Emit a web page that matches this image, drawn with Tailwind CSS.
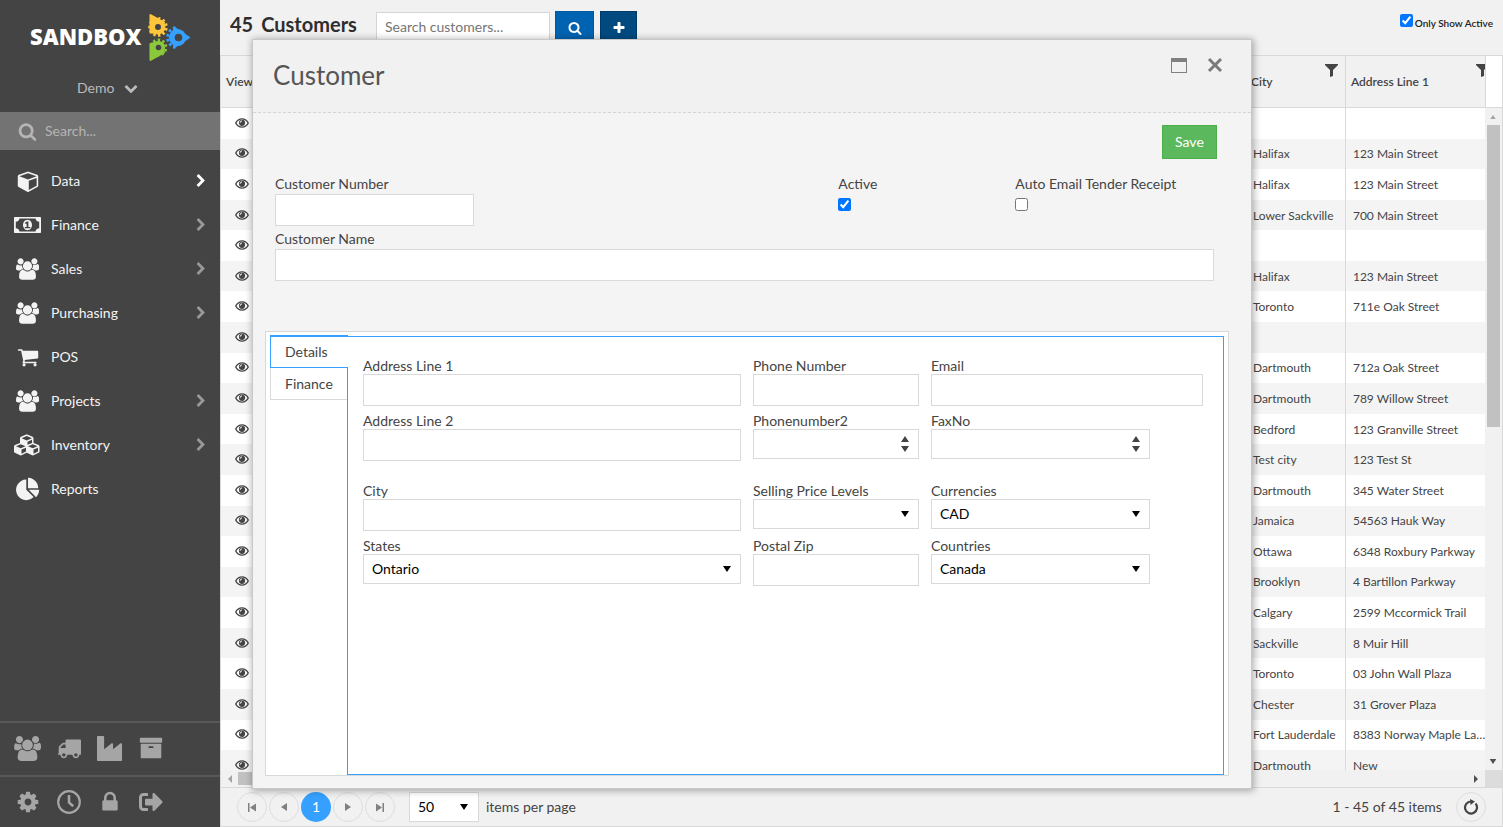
<!DOCTYPE html>
<html lang="en">
<head>
<meta charset="utf-8">
<title>Customers</title>
<script src="https://cdn.jsdelivr.net/npm/@tailwindcss/browser@4"></script>
</head>
<body class="font-['Lato',sans-serif] text-sm text-[#444] bg-[#f1f1f1]">
<svg class="hidden" aria-hidden="true">
  <symbol id="search" viewBox="0 0 1792 1792"><path d="M1216 832q0-185-131.5-316.500t-316.500-131.500-316.500 131.500-131.500 316.500 131.500 316.500 316.500 131.500 316.500-131.500 131.500-316.500zm512 832q0 52-38 90t-90 38q-54 0-90-38l-343-342q-179 124-399 124-143 0-273.500-55.500t-225-150-150-225-55.500-273.500 55.500-273.500 150-225 225-150 273.500-55.500 273.500 55.500 225 150 150 225 55.500 273.500q0 220-124 399l343 343q37 37 37 90z"/></symbol>
  <symbol id="plus" viewBox="0 0 1792 1792"><path d="M1600 736v192q0 40-28 68t-68 28h-416v416q0 40-28 68t-68 28h-192q-40 0-68-28t-28-68v-416h-416q-40 0-68-28t-28-68v-192q0-40 28-68t68-28h416v-416q0-40 28-68t68-28h192q40 0 68 28t28 68v416h416q40 0 68 28t28 68z"/></symbol>
  <symbol id="chev-right" viewBox="0 0 1792 1792"><path d="M1363 877l-742 742q-19 19-45 19t-45-19l-166-166q-19-19-19-45t19-45l531-531-531-531q-19-19-19-45t19-45l166-166q19-19 45-19t45 19l742 742q19 19 19 45t-19 45z"/></symbol>
  <symbol id="chev-down" viewBox="0 0 1792 1792"><path d="M1683 808l-742 741q-19 19-45 19t-45-19l-742-741q-19-19-19-45.500t19-45.500l166-165q19-19 45-19t45 19l531 531 531-531q19-19 45-19t45 19l166 165q19 19 19 45.500t-19 45.500z"/></symbol>
  <symbol id="cube" viewBox="-64 0 1792 1792"><path d="M896 1629l640-349v-636l-640 233v752zm-64-865l698-254-698-254-698 254zm832-252v768q0 35-18 65t-49 47l-704 384q-28 16-61 16t-61-16l-704-384q-31-17-49-47t-18-65v-768q0-40 23-73t61-47l704-256q22-8 44-8t44 8l704 256q38 14 61 47t23 73z"/></symbol>
  <symbol id="money" viewBox="0 256 1920 1280" preserveAspectRatio="none"><path d="M768 1152h384v-96h-128v-448h-114l-148 137 77 80q42-37 55-57h2v288h-128v96zm512-256q0 70-21 142t-59.500 134-101.500 101-138 39-138-39-101.500-101-59.500-134-21-142 21-142 59.500-134 101.500-101 138-39 138 39 101.500 101 59.500 134 21 142zm512 256v-512q-106 0-181-75t-75-181h-1152q0 106-75 181t-181 75v512q106 0 181 75t75 181h1152q0-106 75-181t181-75zm128-832v1152q0 26-19 45t-45 19h-1792q-26 0-45-19t-19-45v-1152q0-26 19-45t45-19h1792q26 0 45 19t19 45z"/></symbol>
  <symbol id="users" viewBox="64 0 1920 1792"><path d="M657 896q-162 5-265 128h-134q-82 0-138-40.500t-56-118.500q0-353 124-353 6 0 43.500 21t97.500 42.500 119 21.500q67 0 133-23-5 37-5 66 0 159 93 287zm1071 637q0 120-73 189.500t-194 69.500h-874q-121 0-194-69.500t-73-189.500q0-53 3.500-103.500t14-109 26.500-108.500 43-97.500 62-81 85.500-53.500 111.500-20q10 0 43 21.500t73 48 107 48 135 21.500 135-21.500 107-48 73-48 43-21.500q61 0 111.500 20t85.500 53.500 62 81 43 97.500 26.500 108.500 14 109 3.500 103.500zm-1024-1277q0 106-75 181t-181 75-181-75-75-181 75-181 181-75 181 75 75 181zm704 384q0 159-112.500 271.500t-271.500 112.500-271.500-112.500-112.500-271.500 112.500-271.500 271.500-112.500 271.500 112.500 112.500 271.500zm576 225q0 78-56 118.500t-138 40.500h-134q-103-123-265-128 93-128 93-287 0-29-5-66 66 23 133 23 59 0 119-21.500t97.500-42.500 43.500-21q124 0 124 353zm-128-609q0 106-75 181t-181 75-181-75-75-181 75-181 181-75 181 75 75 181z"/></symbol>
  <symbol id="cart" viewBox="0 0 1792 1792"><path d="M704 1536q0 52-38 90t-90 38-90-38-38-90 38-90 90-38 90 38 38 90zm896 0q0 52-38 90t-90 38-90-38-38-90 38-90 90-38 90 38 38 90zm128-1088v512q0 24-16.500 42.500t-40.500 21.500l-1044 122q13 60 13 70 0 16-24 64h920q26 0 45 19t19 45-19 45-45 19h-1024q-26 0-45-19t-19-45q0-11 8-31.500t16-36 21.500-40 15.500-29.500l-177-823h-204q-26 0-45-19t-19-45 19-45 45-19h256q16 0 28.500 6.500t19.500 15.500 13 24.500 8 26 5.500 29.500 4.500 26h1201q26 0 45 19t19 45z"/></symbol>
  <symbol id="cubes" viewBox="0 0 2304 1792"><path d="M640 1632l384-192v-314l-384 164v342zm-64-454l404-173-404-173-404 173zm1088 454l384-192v-314l-384 164v342zm-64-454l404-173-404-173-404 173zm-448-293l384-165v-266l-384 164v267zm-64-379l441-189-441-189-441 189zm1088 518v416q0 36-19 67t-52 47l-448 224q-25 14-57 14t-57-14l-448-224q-4-2-7-4-2 2-7 4l-448 224q-25 14-57 14t-57-14l-448-224q-33-16-52-47t-19-67v-416q0-38 21.500-70t56.500-48l434-186v-400q0-38 21.500-70t56.500-48l448-192q23-10 50-10t50 10l448 192q35 16 56.500 48t21.500 70v400l434 186q36 16 57 48t21 70z"/></symbol>
  <symbol id="pie" viewBox="0 -64 1792 1792"><path d="M768 890l546 546q-106 108-247.500 168t-298.500 60q-209 0-385.500-103t-279.500-279.500-103-385.500 103-385.500 279.500-279.500 385.500-103v762zm187 6h773q0 157-60 298.500t-168 247.500zm709-128h-768v-768q209 0 385.500 103t279.500 279.500 103 385.500z"/></symbol>
  <symbol id="truck" viewBox="0 0 1792 1792"><path d="M640 1408q0-52-38-90t-90-38-90 38-38 90 38 90 90 38 90-38 38-90zm-384-512h384v-256h-158q-13 0-22 9l-195 195q-9 9-9 22v30zm1280 512q0-52-38-90t-90-38-90 38-38 90 38 90 90 38 90-38 38-90zm256-1088v1024q0 15-4 26.500t-13.500 18.500-16.500 11.500-23.500 6-22.500 2-25.500 0-22.500-.5q0 106-75 181t-181 75-181-75-75-181h-384q0 106-75 181t-181 75-181-75-75-181h-64q-3 0-22.500.5t-25.500 0-22.500-2-23.500-6-16.500-11.500-13.500-18.500-4-26.500q0-26 19-45t45-19v-320q0-8-.5-35t0-38 2.500-34.500 6.500-37 14-30.500 22.500-30l198-198q19-19 50.500-32t58.500-13h160v-192q0-26 19-45t45-19h1024q26 0 45 19t19 45z"/></symbol>
  <symbol id="industry" viewBox="0 0 1792 1792"><path d="M448 0q26 0 45 19t19 45v891l536-429q17-14 40-14 26 0 45 19t19 45v379l536-429q17-14 40-14 26 0 45 19t19 45v1152q0 26-19 45t-45 19h-1664q-26 0-45-19t-19-45v-1664q0-26 19-45t45-19h384z"/></symbol>
  <symbol id="archive" viewBox="0 0 1792 1792"><path d="M1088 832q0-26-19-45t-45-19h-256q-26 0-45 19t-19 45 19 45 45 19h256q26 0 45-19t19-45zm576-192v960q0 26-19 45t-45 19h-1408q-26 0-45-19t-19-45v-960q0-26 19-45t45-19h1408q26 0 45 19t19 45zm64-448v256q0 26-19 45t-45 19h-1536q-26 0-45-19t-19-45v-256q0-26 19-45t45-19h1536q26 0 45 19t19 45z"/></symbol>
  <symbol id="cog" viewBox="0 0 1792 1792"><path d="M1152 896q0-106-75-181t-181-75-181 75-75 181 75 181 181 75 181-75 75-181zm512-109v222q0 12-8 23t-20 13l-185 28q-19 54-39 91 35 50 107 138 10 12 10 25t-9 23q-27 37-99 108t-94 71q-12 0-26-9l-138-108q-44 23-91 38-16 136-29 186-7 28-36 28h-222q-14 0-24.500-8.500t-11.500-21.500l-28-184q-49-16-90-37l-141 107q-10 9-25 9-14 0-25-11-126-114-165-168-7-10-7-23 0-12 8-23 15-21 51-66.500t54-70.500q-27-50-41-99l-183-27q-13-2-21-12.500t-8-23.500v-222q0-12 8-23t19-13l186-28q14-46 39-92-40-57-107-138-10-12-10-24 0-10 9-23 26-36 98.500-107.500t94.500-71.500q13 0 26 10l138 107q44-23 91-38 16-136 29-186 7-28 36-28h222q14 0 24.500 8.500t11.500 21.500l28 184q49 16 90 37l142-107q9-9 24-9 13 0 25 10 129 119 165 170 7 8 7 22 0 12-8 23-15 21-51 66.500t-54 70.500q26 50 41 98l183 28q13 2 21 12.500t8 23.500z"/></symbol>
  <symbol id="clock" viewBox="0 0 24 24"><circle cx="12" cy="12" r="10.800" fill="none" stroke="currentColor" stroke-width="2.200"/><path d="M12 5v7.500l4.200 3.800" fill="none" stroke="currentColor" stroke-width="2.600"/></symbol>
  <symbol id="lock" viewBox="0 0 1792 1792"><path d="M640 768h512v-192q0-106-75-181t-181-75-181 75-75 181v192zm832 96v576q0 40-28 68t-68 28h-960q-40 0-68-28t-28-68v-576q0-40 28-68t68-28h32v-192q0-184 132-316t316-132 316 132 132 316v192h32q40 0 68 28t28 68z"/></symbol>
  <symbol id="sign-out" viewBox="0 0 512 512"><path d="M497 273L329 441c-15 15-41 4.500-41-17v-96H152c-13.300 0-24-10.700-24-24v-96c0-13.300 10.700-24 24-24h136V88c0-21.400 25.900-32 41-17l168 168c9.300 9.400 9.300 24.600 0 34zM192 436v-40c0-6.600-5.400-12-12-12H96c-17.700 0-32-14.300-32-32V160c0-17.700 14.300-32 32-32h84c6.600 0 12-5.400 12-12V76c0-6.600-5.400-12-12-12H96c-53 0-96 43-96 96v192c0 53 43 96 96 96h84c6.600 0 12-5.400 12-12z"/></symbol>
  <symbol id="eye" viewBox="0 0 14 10"><path fill-rule="evenodd" d="M7 .2C10 .2 12.700 2 14 5c-1.300 3-4 4.800-7 4.800S1.300 8 0 5C1.300 2 4 .2 7 .2zM7 1.500C4.700 1.500 2.600 2.800 1.500 5 2.600 7.200 4.700 8.500 7 8.500S11.400 7.200 12.500 5C11.400 2.800 9.300 1.500 7 1.500z"/><circle cx="7" cy="4.800" r="3.100"/><path d="M5.200 4.700A1.800 1.800 0 0 1 7 2.900" fill="none" stroke="#fff" stroke-width="1"/></symbol>
  <symbol id="funnel" viewBox="0 0 13 13"><path d="M0 0h13v1L8 6v6l-3 1V6L0 1z"/></symbol>
  <symbol id="caret" viewBox="0 0 8 6"><path d="M0 0h8L4 6z"/></symbol>
</svg>

<div class="flex h-screen overflow-hidden">
  <aside class="flex w-[220px] shrink-0 flex-col bg-[#444] text-[#f3f3f3]">
    <div class="flex h-[112px] flex-col">
      <div class="flex items-center gap-2 pt-3 pl-[30px]">
        <span class="w-[110px] font-['Open_Sans',sans-serif] text-[22px] font-extrabold text-white">SANDBOX</span>
        <svg class="h-[50px] w-[43px]" viewBox="0 0 43 50" role="img" aria-label="Sandbox logo">
          <g fill="#ffc63d" stroke="#ffc63d"><path d="M2.500 3L16 10.500 10 21l-7.500-.5z" stroke-width="2" stroke-linejoin="round"/><circle cx="10" cy="15" r="7.500" stroke="none"/><circle cx="10" cy="15" r="8.400" fill="none" stroke-width="2.800" stroke-dasharray="2.400 2.400" pathLength="52.800" transform="rotate(8 10 15)"/></g>
          <g fill="#8cc83c" stroke="#8cc83c"><path d="M2.500 48L16 40.500 11 30l-8.500 2z" stroke-width="2" stroke-linejoin="round"/><circle cx="10.500" cy="35.500" r="6.600" stroke="none"/><circle cx="10.500" cy="35.500" r="7.600" fill="none" stroke-width="2.600" stroke-dasharray="2.400 2.400" pathLength="48" transform="rotate(12 10.500 35.500)"/></g>
          <g fill="#35a0ff" stroke="#35a0ff"><path d="M41 25.500L26 15.500v20z" stroke-width="2" stroke-linejoin="round"/><circle cx="29.500" cy="25.500" r="8.600" stroke="none"/><path d="M27.500 15.700a10 10 0 0 0 0 19.600" fill="none" stroke-width="2.800" stroke-dasharray="2.600 2.400"/></g>
          <g fill="#444"><circle cx="10" cy="15" r="3"/><circle cx="10.500" cy="35.500" r="2.800"/><circle cx="30.500" cy="25.500" r="3.800"/></g>
        </svg>
      </div>
      <button class="flex items-center gap-[10px] pt-4 pl-[77px] leading-5 text-[#bbb]">Demo <svg class="size-[14px] fill-current"><use href="#chev-down"/></svg></button>
    </div>
    <label class="flex h-[38px] items-center gap-2 bg-[#737373] pl-[18px] text-[#b5b5b5]">
      <svg class="size-[19px] fill-current"><use href="#search"/></svg>
      <input class="w-40 bg-transparent outline-none placeholder:text-[#b5b5b5]" placeholder="Search..." aria-label="Search">
    </label>
    <nav class="pt-[9px]">
      <a href="#" class="flex h-11 items-center gap-[5px] pr-3 pl-[9px]"><span class="flex w-[37px] justify-center"><svg class="size-[22px] fill-current"><use href="#cube"/></svg></span><span class="grow">Data</span><svg class="size-[14px] fill-white"><use href="#chev-right"/></svg></a>
      <a href="#" class="flex h-11 items-center gap-[5px] pr-3 pl-[9px]"><span class="flex w-[37px] justify-center"><svg class="h-4 w-[27px] fill-current"><use href="#money"/></svg></span><span class="grow">Finance</span><svg class="size-[14px] fill-[#999]"><use href="#chev-right"/></svg></a>
      <a href="#" class="flex h-11 items-center gap-[5px] pr-3 pl-[9px]"><span class="flex w-[37px] justify-center"><svg class="h-[22px] w-[23px] fill-current"><use href="#users"/></svg></span><span class="grow">Sales</span><svg class="size-[14px] fill-[#999]"><use href="#chev-right"/></svg></a>
      <a href="#" class="flex h-11 items-center gap-[5px] pr-3 pl-[9px]"><span class="flex w-[37px] justify-center"><svg class="h-[22px] w-[23px] fill-current"><use href="#users"/></svg></span><span class="grow">Purchasing</span><svg class="size-[14px] fill-[#999]"><use href="#chev-right"/></svg></a>
      <a href="#" class="flex h-11 items-center gap-[5px] pr-3 pl-[9px]"><span class="flex w-[37px] justify-center"><svg class="size-[22px] fill-current"><use href="#cart"/></svg></span><span class="grow">POS</span></a>
      <a href="#" class="flex h-11 items-center gap-[5px] pr-3 pl-[9px]"><span class="flex w-[37px] justify-center"><svg class="h-[22px] w-[23px] fill-current"><use href="#users"/></svg></span><span class="grow">Projects</span><svg class="size-[14px] fill-[#999]"><use href="#chev-right"/></svg></a>
      <a href="#" class="flex h-11 items-center gap-[5px] pr-3 pl-[9px]"><span class="flex w-[37px] justify-center"><svg class="h-[22px] w-[27px] fill-current"><use href="#cubes"/></svg></span><span class="grow">Inventory</span><svg class="size-[14px] fill-[#999]"><use href="#chev-right"/></svg></a>
      <a href="#" class="flex h-11 items-center gap-[5px] pr-3 pl-[9px]"><span class="flex w-[37px] justify-center"><svg class="size-6 fill-current"><use href="#pie"/></svg></span><span class="grow">Reports</span></a>
    </nav>
    <div class="mt-auto text-[#a5a5a5]">
      <div class="grid h-[54px] grid-cols-[repeat(4,41px)] place-items-center border-t-2 border-[#585858] pb-[2px] pl-[7px]">
        <a href="#" aria-label="Customers"><svg class="h-[25px] w-[27px] fill-current"><use href="#users"/></svg></a>
        <a href="#" aria-label="Suppliers"><svg class="size-6 fill-current"><use href="#truck"/></svg></a>
        <a href="#" aria-label="Industry"><svg class="size-[25px] fill-current"><use href="#industry"/></svg></a>
        <a href="#" aria-label="Archive"><svg class="size-6 fill-current"><use href="#archive"/></svg></a>
      </div>
      <div class="grid h-[52px] grid-cols-[repeat(4,41px)] place-items-center border-t-2 border-[#585858] pl-[7px]">
        <a href="#" aria-label="Settings"><svg class="size-6 fill-current"><use href="#cog"/></svg></a>
        <a href="#" aria-label="History"><svg class="size-6 fill-current"><use href="#clock"/></svg></a>
        <a href="#" aria-label="Lock"><svg class="size-6 fill-current"><use href="#lock"/></svg></a>
        <a href="#" aria-label="Sign out"><svg class="size-6 fill-current"><use href="#sign-out"/></svg></a>
      </div>
    </div>
  </aside>

  <main class="relative flex min-w-0 grow flex-col">
    <header class="flex h-[55px] shrink-0 items-start pr-[10px] pl-[10px]">
      <h1 class="mt-[9px] flex w-[146px] gap-2 text-xl leading-[30px] font-bold text-[#2e2e2e]"><span>45</span><span>Customers</span></h1>
      <input class="mt-3 h-7 w-[174px] border border-[#d5d5d5] bg-white px-2 outline-none placeholder:text-[#757575]" placeholder="Search customers..." aria-label="Search customers">
      <button class="mt-[11px] ml-[5px] flex h-[34px] w-[39px] items-center justify-center border border-[#0058a0] bg-[#0063b1] text-white" aria-label="Search"><svg class="size-[14px] fill-current"><use href="#search"/></svg></button>
      <button class="mt-[11px] ml-[6px] flex h-[34px] w-[37px] items-center justify-center border border-[#003a66] bg-[#004a80] text-white" aria-label="Add customer"><svg class="size-[14px] fill-current"><use href="#plus"/></svg></button>
      <label class="mt-[14px] ml-auto flex gap-[2px] text-[10px] leading-[19px] font-semibold text-[#222]"><input type="checkbox" checked class="size-[13px] accent-[#0075ff]">Only Show Active</label>
    </header>

    <section class="flex min-h-0 grow flex-col border border-[#d9d9d9] text-xs">
      <div class="flex min-h-0 grow">
        <div class="min-w-0 grow overflow-hidden">
          <table class="h-[725px] w-[calc(100%+11px)] table-fixed border-separate border-spacing-0">
            <colgroup><col class="w-10"><col><col class="w-[100px]"><col class="w-[150px]"></colgroup>
            <thead>
              <tr class="h-[52px] bg-[#f1f1f1] text-left">
                <th class="border-b border-[#d9d9d9] p-0 pl-[5px] font-semibold">View</th>
                <th class="border-b border-[#d9d9d9] p-0"></th>
                <th class="border-r border-b border-[#d9d9d9] p-0 pl-[5px] font-semibold"><div class="relative leading-[51px]">City<svg class="absolute top-2 right-[7px] size-[13px] fill-[#444]"><use href="#funnel"/></svg></div></th>
                <th class="border-b border-[#d9d9d9] p-0 pl-[5px] font-semibold"><div class="relative leading-[51px]">Address Line 1<svg class="absolute top-2 right-[7px] size-[13px] fill-[#444]"><use href="#funnel"/></svg></div></th>
              </tr>
            </thead>
            <tbody id="rows"></tbody>
          </table>
        </div>
        <div class="z-10 flex w-[17px] shrink-0 flex-col bg-[#f1f1f1]" aria-hidden="true">
          <div class="h-[52px] border-b border-l border-[#d9d9d9] bg-white"></div>
          <div class="flex h-[17px] items-center justify-center"><svg class="h-1 w-2 rotate-180 fill-[#a3a3a3]"><use href="#caret"/></svg></div>
          <div class="mx-[2px] h-[302px] bg-[#c1c1c1]"></div>
          <div class="mt-auto flex h-[17px] items-center justify-center"><svg class="h-[5px] w-2 fill-[#505050]"><use href="#caret"/></svg></div>
        </div>
      </div>
      <div class="z-10 flex h-[17px] shrink-0 bg-[#f1f1f1]" aria-hidden="true">
        <div class="flex w-[17px] items-center justify-center"><svg class="h-2 w-1 fill-[#a3a3a3]" viewBox="0 0 4 8"><path d="M4 0v8L0 4z"/></svg></div>
        <div class="my-[2px] w-40 bg-[#c1c1c1]"></div>
        <div class="ml-auto flex w-[17px] items-center justify-center"><svg class="h-2 w-1 fill-[#505050]" viewBox="0 0 4 8"><path d="M0 0v8l4-4z"/></svg></div>
        <div class="w-[17px] bg-[#dcdcdc]"></div>
      </div>
      <footer class="z-10 flex h-[39px] shrink-0 items-center gap-[2px] border-t border-[#d9d9d9] bg-[#f1f1f1] pr-4 pl-4 text-sm">
        <button class="flex size-[30px] items-center justify-center rounded-full border border-[#dedede]" aria-label="First page"><svg class="h-[9px] w-2 fill-[#808080]" viewBox="0 0 8 9"><path d="M0 0h1.500v9H0zM8 .5v8l-6-4z"/></svg></button>
        <button class="flex size-[30px] items-center justify-center rounded-full border border-[#dedede]" aria-label="Previous page"><svg class="h-2 w-[6px] fill-[#808080]" viewBox="0 0 6 8"><path d="M6 0v8L0 4z"/></svg></button>
        <button class="flex size-[30px] items-center justify-center rounded-full bg-[#35a0ff] text-white">1</button>
        <button class="flex size-[30px] items-center justify-center rounded-full border border-[#dedede]" aria-label="Next page"><svg class="h-2 w-[6px] fill-[#808080]" viewBox="0 0 6 8"><path d="M0 0v8l6-4z"/></svg></button>
        <button class="flex size-[30px] items-center justify-center rounded-full border border-[#dedede]" aria-label="Last page"><svg class="h-[9px] w-2 fill-[#808080]" viewBox="0 0 8 9"><path d="M6.500 0H8v9H6.500zM0 .5v8l6-4z"/></svg></button>
        <label class="ml-3 flex items-center gap-[7px]"><span class="relative flex items-center"><select class="h-[30px] w-[70px] appearance-none border border-[#d9d9d9] bg-white px-2 text-black"><option>50</option></select><svg class="pointer-events-none absolute right-[11px] h-[6px] w-2"><use href="#caret"/></svg></span>items per page</label>
        <span class="ml-auto">1 - 45 of 45 items</span>
        <button class="ml-3 flex size-[30px] items-center justify-center rounded-full border border-[#dedede]" aria-label="Refresh"><svg class="size-4" viewBox="0 0 16 16"><path d="M12.500 4.500A6 6 0 1 1 8 2.500" fill="none" stroke="#444" stroke-width="2.200"/><path d="M7 0l5 2.600L7.500 6z" fill="#444"/></svg></button>
      </footer>
    </section>

    <div role="dialog" aria-labelledby="dialog-title" class="absolute top-[39px] right-[251px] bottom-[38px] left-8 z-20 flex flex-col border border-[#c8c8c8] bg-[#f4f4f4] shadow-[1px_1px_7px_1px_rgba(0,0,0,0.3)]">
      <div class="flex h-[73px] shrink-0 items-center border-b border-dashed border-[#d5d5d5] bg-[#f1f1f1] pr-7 pl-5">
        <h2 id="dialog-title" class="grow text-[26px] text-[#555]">Customer</h2>
        <button class="mr-5 mb-[22px] h-[15px] w-4 border border-t-4 border-[#808080]" aria-label="Maximize"></button>
        <button class="mb-[22px]" aria-label="Close"><svg class="size-4" viewBox="0 0 16 16"><path d="M2 2l12 12M14 2L2 14" stroke="#7a7a7a" stroke-width="3"/></svg></button>
      </div>
      <form class="flex min-h-0 grow flex-col px-3 pb-3">
        <button type="button" class="mt-3 mr-[22px] h-[34px] w-[55px] self-end border border-[#4cae4c] bg-[#5cb85c] text-white">Save</button>
        <div class="mt-[15px] mr-[25px] ml-[10px] leading-5">
          <div class="flex h-[55px]">
            <label class="w-[60%]">Customer Number<input class="block h-8 w-[199px] border border-[#d9d9d9] bg-white px-2"></label>
            <label class="w-[177px]">Active<input type="checkbox" checked class="mt-1 block size-[13px] accent-[#0075ff]"></label>
            <label>Auto Email Tender Receipt<input type="checkbox" class="mt-1 block size-[13px]"></label>
          </div>
          <label class="block">Customer Name<input class="block h-8 w-full border border-[#d9d9d9] bg-white px-2"></label>
        </div>
        <div class="mt-[50px] mr-[10px] flex grow border border-[#d9d9d9] bg-white pt-[3px] pr-1 pl-1">
          <div role="tablist" class="z-10 -mr-px w-[78px] shrink-0">
            <button type="button" role="tab" aria-selected="true" class="block h-[33px] w-full border border-t-2 border-r-0 border-[#35a0ff] bg-white pl-[14px] text-left">Details</button>
            <button type="button" role="tab" class="block h-8 w-[77px] border border-t-0 border-r-0 border-[#d9d9d9] bg-white pl-[14px] text-left">Finance</button>
          </div>
          <div role="tabpanel" class="mt-px grid grow grid-cols-[378fr_166fr_272fr] grid-rows-[55px_70px_55px_55px] gap-x-3 border border-[#35a0ff] pt-5 pr-5 pl-[15px] leading-[17px]">
            <label>Address Line 1<input class="block h-8 w-full border border-[#d9d9d9] px-2"></label>
            <label>Phone Number<input class="block h-8 w-full border border-[#d9d9d9] px-2"></label>
            <label>Email<input type="email" class="block h-8 w-full border border-[#d9d9d9] px-2"></label>

            <label>Address Line 2<input class="block h-8 w-full border border-[#d9d9d9] px-2"></label>
            <label>Phonenumber2<span class="relative block"><input class="block h-[30px] w-full border border-[#d9d9d9] px-2"><svg class="absolute top-[7px] right-[10px] h-4 w-2 fill-[#444]" viewBox="0 0 8 16"><path d="M4 0l4 6H0zM0 10h8l-4 6z"/></svg></span></label>
            <label>FaxNo<span class="relative block w-[219px]"><input class="block h-[30px] w-full border border-[#d9d9d9] px-2"><svg class="absolute top-[7px] right-[10px] h-4 w-2 fill-[#444]" viewBox="0 0 8 16"><path d="M4 0l4 6H0zM0 10h8l-4 6z"/></svg></span></label>

            <label>City<input class="block h-8 w-full border border-[#d9d9d9] px-2"></label>
            <label>Selling Price Levels<span class="relative block"><select class="block h-[30px] w-full appearance-none border border-[#d9d9d9] bg-white px-2 text-black"><option></option></select><svg class="pointer-events-none absolute top-3 right-[10px] h-[6px] w-2"><use href="#caret"/></svg></span></label>
            <label>Currencies<span class="relative block w-[219px]"><select class="block h-[30px] w-full appearance-none border border-[#d9d9d9] bg-white px-2 pb-px text-black"><option>CAD</option></select><svg class="pointer-events-none absolute top-3 right-[10px] h-[6px] w-2"><use href="#caret"/></svg></span></label>

            <label>States<span class="relative block"><select class="block h-[30px] w-full appearance-none border border-[#d9d9d9] bg-white px-2 pb-px text-black"><option>Ontario</option></select><svg class="pointer-events-none absolute top-3 right-[10px] h-[6px] w-2"><use href="#caret"/></svg></span></label>
            <label>Postal Zip<input class="block h-8 w-full border border-[#d9d9d9] px-2"></label>
            <label>Countries<span class="relative block w-[219px]"><select class="block h-[30px] w-full appearance-none border border-[#d9d9d9] bg-white px-2 pb-px text-black"><option>Canada</option></select><svg class="pointer-events-none absolute top-3 right-[10px] h-[6px] w-2"><use href="#caret"/></svg></span></label>
          </div>
        </div>
      </form>
    </div>
  </main>
</div>
<script>
const customers = [
  ["", ""], ["Halifax", "123 Main Street"], ["Halifax", "123 Main Street"], ["Lower Sackville", "700 Main Street"],
  ["", ""], ["Halifax", "123 Main Street"], ["Toronto", "711e Oak Street"], ["", ""],
  ["Dartmouth", "712a Oak Street"], ["Dartmouth", "789 Willow Street"], ["Bedford", "123 Granville Street"],
  ["Test city", "123 Test St"], ["Dartmouth", "345 Water Street"], ["Jamaica", "54563 Hauk Way"],
  ["Ottawa", "6348 Roxbury Parkway"], ["Brooklyn", "4 Bartillon Parkway"], ["Calgary", "2599 Mccormick Trail"],
  ["Sackville", "8 Muir Hill"], ["Toronto", "03 John Wall Plaza"], ["Chester", "31 Grover Plaza"],
  ["Fort Lauderdale", "8383 Norway Maple Lane"], ["Dartmouth", "New"],
];
document.getElementById("rows").innerHTML = customers.map(([city, address]) => `
  <tr class="bg-white even:bg-[#f4f4f4]">
    <td class="p-0 pb-px"><button class="ml-[14px] flex h-7 items-center" aria-label="View"><svg class="h-[10px] w-[14px] fill-[#444]"><use href="#eye"/></svg></button></td>
    <td class="p-0"></td>
    <td class="border-r border-[#d9d9d9] p-0 pt-px pl-[7px] whitespace-nowrap">${city}</td>
    <td class="truncate p-0 pt-px pr-2 pl-[7px]">${address}</td>
  </tr>`).join("");
</script>
</body>
</html>
